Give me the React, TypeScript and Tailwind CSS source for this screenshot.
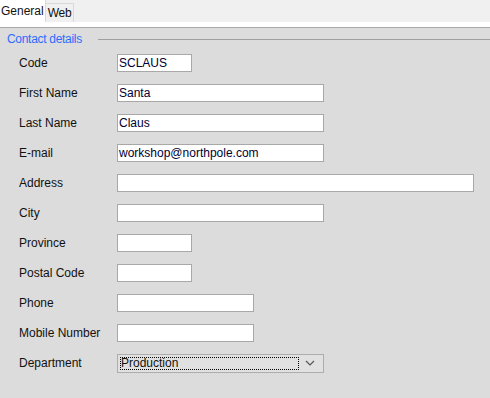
const rows: { label: string; value: string; w: string }[] = [
  { label: "Code", value: "SCLAUS", w: "w-[75px]" },
  { label: "First Name", value: "Santa", w: "w-[207px]" },
  { label: "Last Name", value: "Claus", w: "w-[207px]" },
  { label: "E-mail", value: "workshop@northpole.com", w: "w-[207px]" },
  { label: "Address", value: "", w: "w-[357px]" },
  { label: "City", value: "", w: "w-[207px]" },
  { label: "Province", value: "", w: "w-[75px]" },
  { label: "Postal Code", value: "", w: "w-[75px]" },
  { label: "Phone", value: "", w: "w-[137px]" },
  { label: "Mobile Number", value: "", w: "w-[137px]" },
];

export default function App() {
  return (
    <div className="w-[490px] h-[398px] bg-[#dcdcdc] text-[12px] text-[#111] overflow-hidden" style={{ fontFamily: '"Liberation Sans", Arial, sans-serif' }}>
      <div className="flex items-end h-[22px] bg-[#f0f0f0]">
        <div className="h-[22px] px-[1px] bg-white border-r border-[#d9d9d9] flex items-center">General</div>
        <div className="h-[19px] px-[2px] bg-[#f0f0f0] border-t border-r border-[#d9d9d9] flex items-center tracking-[-0.3px]">Web</div>
      </div>
      <div className="h-[6px] bg-white border-b border-[#a8a8a8]" />
      <div className="flex items-center h-[20px] pt-[2px]">
        <span className="pl-[7px] text-[#2b6cff] tracking-[-0.3px]">Contact details</span>
        <div className="ml-[16px] flex-1 border-t border-[#a0a0a0]" />
      </div>
      <div className="flex flex-col">
        {rows.map((r) => (
          <div key={r.label} className="flex items-center h-[30px]">
            <span className="w-[117px] pl-[19px]">{r.label}</span>
            <div className={`${r.w} h-[18px] bg-white border border-[#a8a8a8] pl-[1px] flex items-center text-[#000033]`}>{r.value}</div>
          </div>
        ))}
        <div className="flex items-center h-[30px]">
          <span className="w-[117px] pl-[19px]">Department</span>
          <div className="w-[207px] h-[19px] bg-[#e1e1e1] border border-[#adadad] flex items-center p-[2px]">
            <div className="flex-1 h-full border border-dotted border-black flex items-center leading-none">Production</div>
            <svg width="22" height="12" viewBox="0 0 22 12" className="shrink-0">
              <path d="M7 4 L11 8 L15 4" fill="none" stroke="#555" strokeWidth="1.2" />
            </svg>
          </div>
        </div>
      </div>
    </div>
  );
}
